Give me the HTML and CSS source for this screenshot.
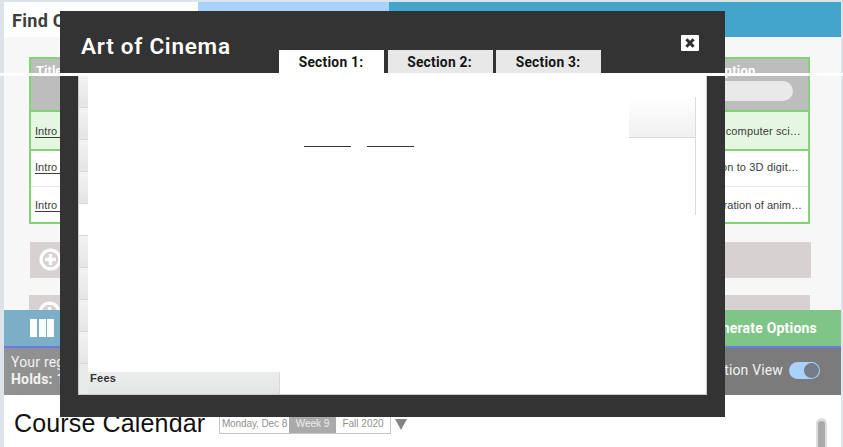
FILE: index.html
```html
<!DOCTYPE html>
<html lang="en">
<head>
<meta charset="utf-8">
<title>Course Calendar</title>
<link rel="stylesheet" href="styles.css">
</head>
<body>
<div class="page">
  <nav class="topnav">
    <div class="nav-current"><span>Find Courses</span></div>
    <div class="nav-next"></div>
    <div class="nav-rest"></div>
  </nav>
  <main class="search">
    <div class="table">
      <div class="thead"><span>Title</span><div class="desc-head"><span>Description</span><div class="filter"></div></div></div>
      <div class="row picked"><a>Intro to</a><span class="d1">Study of computer sci…</span></div>
      <div class="row second"><a>Intro to</a><span class="d2">Introduction to 3D digit…</span></div>
      <div class="row third"><a>Intro to</a><span class="d3">Exploration of anim…</span></div>
    </div>
    <div class="bar">
      <svg width="27" height="27" viewBox="0 0 27 27"><circle cx="12.5" cy="12.5" r="9.4" fill="none" stroke="#fff" stroke-width="3.2"/><path d="M12.5 7v11M7 12.5h11" stroke="#fff" stroke-width="3.4"/></svg>
    </div>
    <div class="bar lower">
      <svg width="27" height="27" viewBox="0 0 27 27"><circle cx="12.5" cy="12.5" r="9.4" fill="none" stroke="#fff" stroke-width="3.2"/><path d="M12.5 7v11M7 12.5h11" stroke="#fff" stroke-width="3.4"/></svg>
    </div>
  </main>
  <div class="actions">
    <div class="view"><i></i><i></i><i></i></div>
    <div class="generate"><span>Generate Options</span></div>
  </div>
  <div class="status">
    <div class="reg"><div>Your registration</div><b>Holds: 1</b></div>
    <div class="toggle-group"><span>Registration View</span><div class="toggle"><i></i></div></div>
  </div>
  <div class="calendar">
    <h1><span>Course Calendar</span></h1>
    <div class="dates"><div class="day"><span>Monday, Dec 8</span></div><div class="week"><span>Week 9</span></div><div class="term"><span>Fall 2020</span></div></div>
    <svg class="arrow" width="12" height="11"><path d="M0 0H12L6 11Z" fill="#858585"/></svg>
    <div class="scroll"></div>
  </div>
</div>

<section class="modal">
  <header>
    <h2><span>Art of Cinema</span></h2>
    <div class="tabs"><div class="tab active"><span>Section 1:</span></div><div class="tab"><span>Section 2:</span></div><div class="tab"><span>Section 3:</span></div></div>
    <div class="close"><svg width="18" height="16"><path d="M5.4 4.2l7.2 7.6M12.6 4.2l-7.2 7.6" stroke="#303030" stroke-width="3"/></svg></div>
  </header>
  <div class="panel">
    <div class="side">
      <div class="labels"><i></i><i></i><i></i><i></i><i class="selected"></i><i></i><i></i><i></i><i></i><i class="last"></i></div>
      <div class="fees"><span>Fees</span></div>
    </div>
    <div class="details"><i></i><i></i></div>
    <div class="aside"><div class="aside-head"></div></div>
  </div>
</section>
<div class="divider"></div>
</body>
</html>
```

FILE: styles.css
```css
* { box-sizing: border-box; }
body { margin: 0; width: 843px; height: 447px; overflow: hidden; position: relative; background: #dce4ea; font-family: Roboto, "Liberation Sans", sans-serif; }
h1, h2 { margin: 0; font-weight: 400; }
span { white-space: nowrap; }
.page { margin: 0 2px 0 4px; padding-top: 2px; height: 447px; display: flex; flex-direction: column; }
.topnav { display: flex; height: 35px; flex: none; }
.nav-current { width: 194px; background: #fff; padding: 8px 0 0 8px; font-size: 18px; line-height: 22px; font-weight: 700; color: #3e3e3e; letter-spacing: .3px; }
.nav-next { width: 191px; background: #a8d1fb; }
.nav-rest { flex: 1; background: #43a5cb; }

.search { height: 273px; flex: none; overflow: hidden; background: #f7f7f7; padding: 20px 30px 0 25px; }
.table { width: 781px; height: 167px; border: 2px solid #80d473; background: #fff; }
.thead { height: 51px; background: #bdbdbd; display: flex; justify-content: space-between; padding: 3px 15px 0 5px; color: #fff; font-size: 13px; line-height: 17px; font-weight: 700; }
.desc-head { width: 110px; display: flex; flex-direction: column; padding-left: 3px; letter-spacing: .25px; }
.filter { height: 20px; margin-top: 2px; border-radius: 10px; background: #e9e9e9; }
.row { height: 38px; display: flex; align-items: center; justify-content: space-between; padding: 0 6px 0 4px; font: 11px/14px "Liberation Sans", sans-serif; color: #3b3b3b; letter-spacing: .05px; }
.row a { text-decoration: underline; text-underline-offset: 2px; }
.row.picked { height: 41px; background: #e5f7e1; border: solid #80d473; border-width: 2px 0; }
.row.second { height: 36px; border-bottom: 1px solid #e7e7e7; padding-bottom: 3px; }
.row.third { height: 36px; }
.d1 { margin-right: 1px; letter-spacing: .15px; }
.d2 { margin-right: 3px; letter-spacing: .15px; }
.bar { width: 781px; height: 36px; margin: 18px 0 0 1px; background: #d7d1d1; padding: 5px 0 0 8px; }
.bar.lower { margin: 17px 0 0 0; }

.actions { height: 38px; flex: none; display: flex; border-bottom: 2px solid #657be8; }
.view { width: 400px; background: #7bafc7; display: flex; gap: 1.5px; padding: 9px 0 0 26px; }
.view i { width: 7px; height: 18px; background: #fff; }
.generate { flex: 1; background: #80c588; text-align: right; padding: 9px 24px 0 0; color: #fff; font-size: 14px; line-height: 18px; font-weight: 700; letter-spacing: .2px; }
.status { height: 47px; flex: none; display: flex; justify-content: space-between; background: linear-gradient(90deg, #929292, #7b7b7b 50%); color: #f2f2f2; padding: 6px 21px 0 7px; }
.reg { font-size: 14px; line-height: 17px; letter-spacing: .2px; }
.toggle-group { display: flex; gap: 6px; font-size: 14px; line-height: 18px; padding-top: 7px; letter-spacing: .15px; }
.toggle { width: 31px; height: 17px; border-radius: 9px; background: #a8d1fb; padding: 1px 0 0 15px; margin-top: 1px; }
.toggle i { display: block; width: 15px; height: 15px; border-radius: 50%; background: #737d87; }
.calendar { flex: 1; background: #fff; display: flex; padding: 0 14px 0 10px; }
h1 { width: 206px; font: 25px/28px "Liberation Sans", sans-serif; padding-top: 14px; color: #111; letter-spacing: .15px; }
.dates { height: 24px; width: 172px; margin: 15px 0 0 -1px; display: flex; border: 1px solid #c6c6c6; font-family: "Liberation Sans", sans-serif; font-size: 10px; line-height: 12px; color: #919191; }
.dates div { text-align: center; padding-top: 7px; }
.day { width: 69px; letter-spacing: -.1px; }
.week { width: 47px; background: #aaa; color: #eee; }
.term { flex: 1; }
.arrow { margin: 24px 0 0 4px; }
.scroll { width: 11px; height: 40px; margin: 23px 0 0 auto; background: #aaa; border: solid #dedede; border-width: 3px 2px; border-radius: 6px; }

.modal { position: absolute; left: 60px; top: 11px; width: 665px; height: 406px; background: #333; padding: 0 18px 22px; display: flex; flex-direction: column; }
.modal header { height: 65px; flex: none; display: flex; }
h2 { width: 201px; padding: 21px 0 0 3px; font-size: 22.5px; line-height: 28px; font-weight: 600; color: #fff; letter-spacing: .75px; }
.tabs { display: flex; gap: 3.5px; padding-top: 39px; }
.tab { width: 105px; height: 26px; background: #e8e8e8; text-align: center; font-size: 13.8px; line-height: 24px; font-weight: 700; color: #151515; letter-spacing: .25px; padding-right: 1px; }
.tab.active { background: #fff; }
.close { width: 18px; height: 16px; border-radius: 1px; margin: 24px 8px 0 auto; background: #fff; }
.close svg { display: block; }
.panel { flex: 1; display: flex; background: #fff; border: solid #c9c9c9; border-width: 0 1px 1px; }
.side { width: 202px; display: flex; flex-direction: column; position: relative; }
.labels { width: 9px; height: 318px; display: flex; flex-direction: column; }
.labels i { height: 32px; flex: none; background: linear-gradient(#f3f3f3, #e5e5e5); border-bottom: 1px solid #d9d9d9; }
.labels .selected { background: #fff; }
.labels .last { height: 30px; border: 0; background: #e9ebeb; }
.fees { position: absolute; left: 9px; bottom: 0; width: 192px; height: 22px; background: linear-gradient(#eceded, #e3e6e6); border-right: 1px solid #d8d8d8; padding-left: 2px; font: bold 11px/13px "Liberation Sans", sans-serif; color: #333; letter-spacing: .3px; }
.details { width: 348px; display: flex; gap: 16px; padding: 70px 0 0 23px; }
.details i { width: 47px; height: 1px; background: #333; }
.aside { width: 67px; height: 118px; margin-top: 21px; border-right: 1px solid #dcdcdc; }
.aside-head { height: 41px; background: linear-gradient(#fff, #f0f0f0); border-bottom: 1px solid #d8d8d8; }
.divider { position: absolute; left: 0; top: 73px; width: 843px; height: 3px; background: #fff; }
```
